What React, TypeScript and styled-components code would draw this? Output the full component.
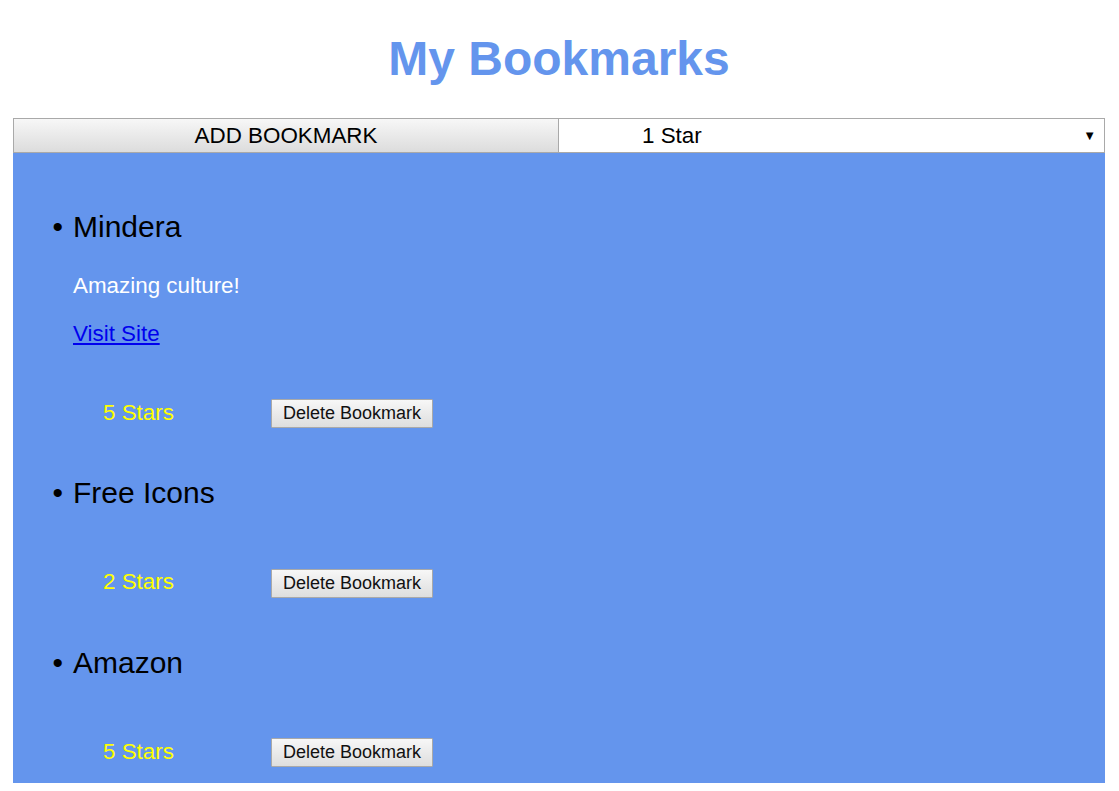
import React from "react";
import styled, { createGlobalStyle } from "styled-components";

const GlobalStyle = createGlobalStyle`
  html, body {
    margin: 0;
    padding: 0;
    background: #ffffff;
    font-family: "Liberation Sans", Arial, sans-serif;
  }
`;

const Page = styled.div`
  padding: 0 14px 8px 13px;
`;

const Heading = styled.h1`
  margin: 0;
  padding-top: 31px;
  font-size: 48px;
  line-height: 55px;
  font-weight: bold;
  text-align: center;
  color: #6495ed;
`;

const Toolbar = styled.div`
  display: grid;
  grid-template-columns: 1fr 1fr;
  margin-top: 32px;
  height: 35px;
`;

const AddButton = styled.button`
  font-family: "Liberation Sans", Arial, sans-serif;
  font-size: 22.4px;
  color: #000;
  background: linear-gradient(#f7f7f7, #dcdcdc);
  border: 1px solid #a9a9a9;
  margin: 0;
  padding: 0;
  height: 35px;
  cursor: pointer;
`;

const SelectWrap = styled.div`
  position: relative;
  height: 35px;
  &::after {
    content: "▼";
    position: absolute;
    right: 9px;
    top: 10px;
    font-size: 13px;
    color: #000;
    pointer-events: none;
  }
`;

const Select = styled.select`
  appearance: none;
  -webkit-appearance: none;
  width: 100%;
  height: 35px;
  margin: 0;
  padding: 0 0 0 83px;
  font-family: "Liberation Sans", Arial, sans-serif;
  font-size: 22.4px;
  color: #000;
  background: #fff;
  border: 1px solid #a9a9a9;
  border-left: none;
  border-radius: 0;
  outline: none;
`;

const Panel = styled.ul`
  margin: 0;
  padding: 57px 0 16px 60px;
  background: #6495ed;
  list-style: disc outside;
`;

const Item = styled.li`
  font-size: 30px;
  color: #000;
  &::marker {
    content: "\\2022\\2004";
    font-size: 30px;
  }
  & + & {
    margin-top: 48px;
  }
`;

const ItemTitle = styled.div`
  font-size: 30px;
  line-height: 34px;
`;

const Description = styled.p`
  margin: 29px 0 0;
  font-size: 22.4px;
  line-height: 26px;
  color: #fff;
`;

const SiteLink = styled.a`
  display: block;
  margin-top: 22px;
  font-size: 22.4px;
  line-height: 26px;
  color: #0000ee;
  text-decoration: underline;
  width: max-content;
`;

const Row = styled.div<{ $gap: number }>`
  display: flex;
  align-items: center;
  margin: ${(p) => p.$gap}px 0 0 30px;
  height: 29px;
`;

const Stars = styled.span`
  width: 168px;
  padding-bottom: 2px;
  font-size: 22.4px;
  line-height: 26px;
  color: #ffff00;
`;

const DeleteButton = styled.button`
  font-family: "Liberation Sans", Arial, sans-serif;
  font-size: 18px;
  line-height: 21px;
  color: #111;
  background: linear-gradient(#f7f7f7, #dedede);
  border: 1px solid #a9a9a9;
  border-radius: 1px;
  padding: 3px 11px 3px;
  height: 29px;
  margin: 0;
  cursor: pointer;
`;

type Bookmark = {
  name: string;
  description?: string;
  url?: string;
  stars: number;
};

const bookmarks: Bookmark[] = [
  { name: "Mindera", description: "Amazing culture!", url: "#", stars: 5 },
  { name: "Free Icons", stars: 2 },
  { name: "Amazon", stars: 5 },
];

export default function App() {
  return (
    <>
      <GlobalStyle />
      <Page>
        <Heading>My Bookmarks</Heading>
        <Toolbar>
          <AddButton>ADD BOOKMARK</AddButton>
          <SelectWrap>
            <Select defaultValue="1">
              <option value="1">1 Star</option>
              <option value="2">2 Stars</option>
              <option value="3">3 Stars</option>
              <option value="4">4 Stars</option>
              <option value="5">5 Stars</option>
            </Select>
          </SelectWrap>
        </Toolbar>
        <Panel>
          {bookmarks.map((b) => (
            <Item key={b.name}>
              <ItemTitle>{b.name}</ItemTitle>
              {b.description && <Description>{b.description}</Description>}
              {b.url && <SiteLink href={b.url}>Visit Site</SiteLink>}
              <Row $gap={b.description ? 52 : 58.5}>
                <Stars>{b.stars} Stars</Stars>
                <DeleteButton>Delete Bookmark</DeleteButton>
              </Row>
            </Item>
          ))}
        </Panel>
      </Page>
    </>
  );
}
